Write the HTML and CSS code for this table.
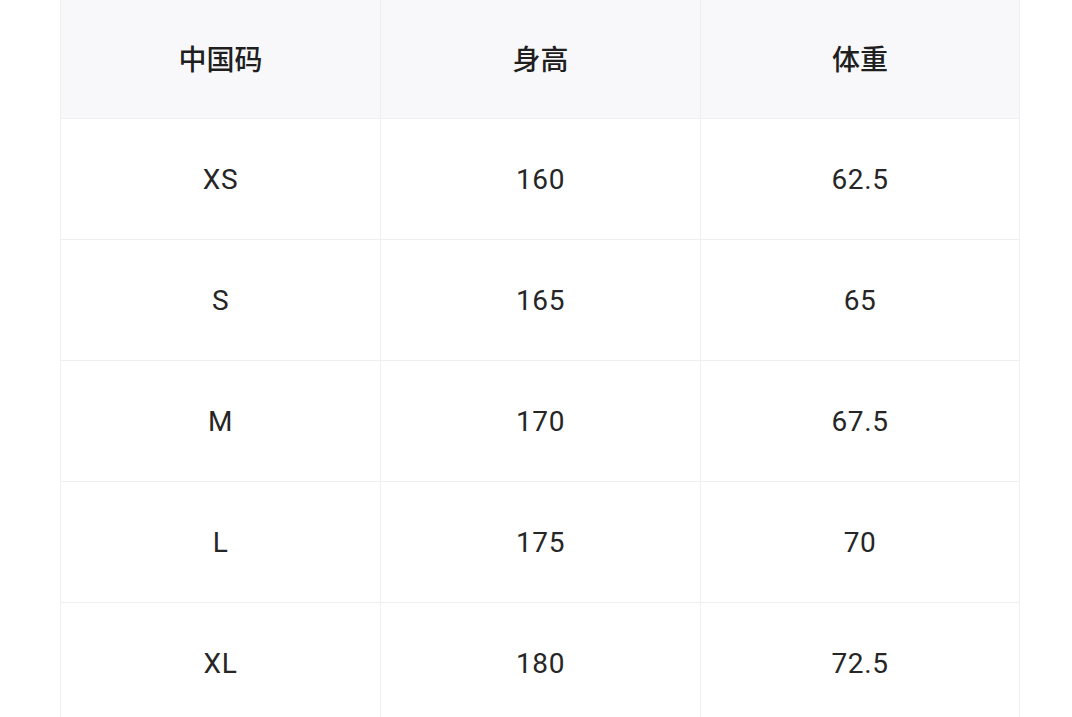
FILE: index.html
```html
<!DOCTYPE html>
<html lang="zh">
<head>
<meta charset="utf-8">
<link rel="stylesheet" href="styles.css">
</head>
<body>
<div class="table">
  <div class="cell head">中国码</div>
  <div class="cell head">身高</div>
  <div class="cell head">体重</div>
  <div class="cell">XS</div>
  <div class="cell">160</div>
  <div class="cell">62.5</div>
  <div class="cell">S</div>
  <div class="cell">165</div>
  <div class="cell">65</div>
  <div class="cell">M</div>
  <div class="cell">170</div>
  <div class="cell">67.5</div>
  <div class="cell">L</div>
  <div class="cell">175</div>
  <div class="cell">70</div>
  <div class="cell">XL</div>
  <div class="cell">180</div>
  <div class="cell">72.5</div>
</div>
</body>
</html>
```

FILE: styles.css
```css
html, body {
  margin: 0;
  padding: 0;
  background: #ffffff;
}
body {
  font-family: Roboto, "Noto Sans CJK SC", sans-serif;
  color: #222222;
  overflow: hidden;
}
.table {
  margin-left: 60px;
  width: 960px;
  display: grid;
  grid-template-columns: 320px 320px 319px;
  grid-auto-rows: 121px;
  grid-template-rows: 119px;
  border-left: 1px solid #efeff1;
  box-sizing: border-box;
}
.cell {
  display: flex;
  align-items: center;
  justify-content: center;
  border-right: 1px solid #efeff1;
  border-bottom: 1px solid #efeff1;
  font-size: 28px;
  letter-spacing: 0.6px;
  color: #262626;
  box-sizing: border-box;
}
.head {
  background: #f8f8fa;
  font-family: "Noto Sans CJK SC", sans-serif;
  font-weight: 500;
  font-size: 28px;
  letter-spacing: 0;
  color: #1f1f1f;
  padding-bottom: 3px;
}
```
